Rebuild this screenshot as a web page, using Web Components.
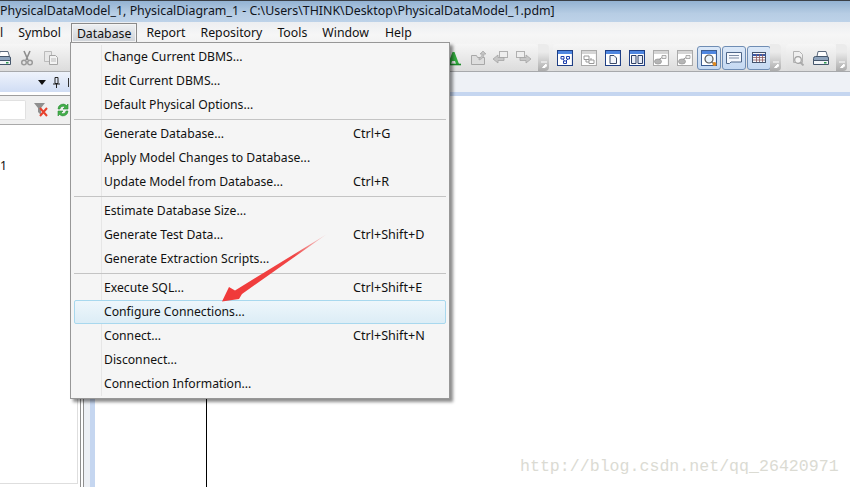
<!DOCTYPE html>
<html>
<head>
<meta charset="utf-8">
<title>PhysicalDataModel_1</title>
<style>
  html, body { margin: 0; height: 100%; overflow: hidden; background: #fff; }
  body { font: 12.2px "Noto Sans", "Liberation Sans", sans-serif; color: #111; }
</style>
</head>
<body>
<app-window>
  <title-bar>PhysicalDataModel_1, PhysicalDiagram_1 - C:\Users\THINK\Desktop\PhysicalDataModel_1.pdm]</title-bar>
  <menu-bar>
    <menu-title left="-2">l</menu-title>
    <menu-title left="11">Symbol</menu-title>
    <menu-title left="8" active>Database</menu-title>
    <menu-title left="7">Report</menu-title>
    <menu-title left="11">Repository</menu-title>
    <menu-title left="11">Tools</menu-title>
    <menu-title left="11">Window</menu-title>
    <menu-title left="12">Help</menu-title>
  </menu-bar>
  <tool-strip>
    <tool-group style="margin-left:-5px;width:77px">
      <tool-icon name="print" style="margin-right:8px"></tool-icon>
      <tool-icon name="cut" style="margin-right:8px"></tool-icon>
      <tool-icon name="copy"></tool-icon>
    </tool-group>
    <tool-group style="margin-left:366px;width:100px;justify-content:flex-end;padding-right:6px">
      <tool-icon name="font" style="margin-right:8px"></tool-icon>
      <tool-icon name="export" style="margin-right:6px"></tool-icon>
      <tool-icon name="back" style="margin-right:8px"></tool-icon>
      <tool-icon name="forward"></tool-icon>
    </tool-group>
    <tool-chevron></tool-chevron>
    <tool-group style="margin-left:4px;width:217px;padding-left:4px;gap:8px">
      <tool-icon name="tree"></tool-icon>
      <tool-icon name="boxes"></tool-icon>
      <tool-icon name="page"></tool-icon>
      <tool-icon name="pages"></tool-icon>
      <tool-icon name="link"></tool-icon>
      <tool-icon name="link"></tool-icon>
      <tool-icon name="zoomwin" active style="margin-left:-4px"></tool-icon>
      <tool-icon name="note" active style="margin-left:-7px"></tool-icon>
      <tool-icon name="grid" active style="margin-left:-7px"></tool-icon>
    </tool-group>
    <tool-chevron></tool-chevron>
    <tool-group style="margin-left:5px;width:50px;padding-left:4px;gap:7px">
      <tool-icon name="preview"></tool-icon>
      <tool-icon name="print"></tool-icon>
    </tool-group>
    <tool-chevron></tool-chevron>
  </tool-strip>
  <work-area>
    <side-panel>1</side-panel>
    <panel-splitter></panel-splitter>
    <diagram-canvas></diagram-canvas>
  </work-area>
  <drop-menu>
    <menu-row>Change Current DBMS...</menu-row>
    <menu-row>Edit Current DBMS...</menu-row>
    <menu-row>Default Physical Options...</menu-row>
    <menu-rule></menu-rule>
    <menu-row keys="Ctrl+G">Generate Database...</menu-row>
    <menu-row>Apply Model Changes to Database...</menu-row>
    <menu-row keys="Ctrl+R">Update Model from Database...</menu-row>
    <menu-rule></menu-rule>
    <menu-row>Estimate Database Size...</menu-row>
    <menu-row keys="Ctrl+Shift+D">Generate Test Data...</menu-row>
    <menu-row>Generate Extraction Scripts...</menu-row>
    <menu-rule></menu-rule>
    <menu-row keys="Ctrl+Shift+E">Execute SQL...</menu-row>
    <menu-row hot>Configure Connections...</menu-row>
    <menu-row keys="Ctrl+Shift+N">Connect...</menu-row>
    <menu-row>Disconnect...</menu-row>
    <menu-row>Connection Information...</menu-row>
  </drop-menu>
  <red-arrow></red-arrow>
  <water-mark>http://blog.csdn.net/qq_26420971</water-mark>
</app-window>

<script>
/**
 * Small helper so every element below gets an open shadow root from a string.
 *
 * @param {HTMLElement} host - The element to attach to.
 * @param {string} html - Markup and style of the shadow root.
 */
function fillShadow (host, html) {
  host.attachShadow({ mode: 'open' }).innerHTML = html
}

/**
 * Defines a custom element that has nothing but static shadow markup.
 *
 * @param {string} name - The tag name.
 * @param {string} html - Markup and style of the shadow root.
 */
function defineStatic (name, html) {
  customElements.define(name, class extends HTMLElement {
    constructor () {
      super()
      fillShadow(this, html)
    }
  })
}

defineStatic('app-window', `
  <style>
    :host { display: flex; flex-direction: column; position: relative; width: 850px; height: 487px; overflow: hidden; }
  </style>
  <slot></slot>
`)

defineStatic('title-bar', `
  <style>
    :host {
      display: block; height: 21px; line-height: 20px; white-space: nowrap;
      border-top: 1px solid #3a3f46; color: #10141c; font-size: 12.38px;
      background: linear-gradient(#93b2d2, #b7cde4 60%, #bdd2e8);
    }
  </style>
  <slot></slot>
`)

defineStatic('menu-bar', `
  <style>
    :host {
      display: flex; height: 21px; white-space: nowrap; font-size: 12.3px;
      background: linear-gradient(#eceef1, #f6f6f6 60%, #f3f3f3);
    }
  </style>
  <slot></slot>
`)

customElements.define('menu-title', class extends HTMLElement {
  constructor () {
    super()
    fillShadow(this, `
      <style>
        :host { display: block; margin-left: ${this.getAttribute('left')}px; }
        span { display: block; height: 19px; margin-top: 1px; line-height: 20px; padding: 0 2px; box-sizing: border-box; }
        :host([active]) span {
          padding: 0 5px; height: 20px; line-height: 19px; border: 1px solid #8a8a8a; border-bottom-color: #777;
          background: linear-gradient(#eef0f2, #cfd3d8); box-shadow: inset 0 0 0 1px #f4f4f4;
        }
      </style>
      <span><slot></slot></span>
    `)
  }
})

defineStatic('tool-strip', `
  <style>
    :host {
      display: flex; align-items: center; height: 29px; box-sizing: border-box; white-space: nowrap;
      padding-top: 1px; border-bottom: 1px solid #a7a9ac;
      background: linear-gradient(#f4f4f4, #dedede);
    }
  </style>
  <slot></slot>
`)

defineStatic('tool-group', `
  <style>
    :host {
      display: flex; align-items: center; flex: none; box-sizing: border-box; height: 27px; border-radius: 4px;
      background: linear-gradient(#f6f6f6, #dcdcdc);
    }
  </style>
  <slot></slot>
`)

defineStatic('tool-chevron', `
  <style>
    :host {
      display: block; flex: none; width: 11px; height: 27px; position: relative; border-radius: 0 4px 4px 0;
      background: linear-gradient(#ebebeb 30%, #acacac);
    }
    svg { display: block; position: absolute; left: 2px; bottom: 3px; }
  </style>
  <svg width="8" height="7" viewBox="0 0 8 7"><path d="M1 1h6M6 3L2.500 6.500h2.500L6.500 5z" fill="#fff" stroke="#fff" stroke-width="1"/></svg>
`)

/**
 * Window style frame used by most of the diagram buttons: title strip on top, heavy right and bottom edge.
 *
 * @param {string} edge - Colour of the frame.
 * @param {string} strip - Colour of the title strip.
 * @param {string} body - Extra svg inside the frame.
 * @returns {string} - The svg content.
 */
const frame = (edge, strip, body) => `
  <rect x=".5" y=".5" width="15" height="15" fill="#fff" stroke="${edge}"/>
  <rect x="1" y="1" width="14" height="3" fill="${strip}"/>
  <path d="M15.500 4v11.500H2" fill="none" stroke="${edge}" stroke-width="1.200"/>
  ${body}`

const ICONS = {
  print: '<path d="M5 1.500h8l1.500 5H4z" fill="#fff" stroke="#5d6b7e"/><path d="M2.500 6.500h11.500a1.500 1.500 0 0 1 1.500 1.500v5H.5V8.500a2 2 0 0 1 2-2z" fill="#8ea4bd" stroke="#45566b"/><path d="M.5 10.500h15v4H.5z" fill="#f2f5f8" stroke="#45566b"/><rect x="11" y="12" width="2.500" height="1.500" fill="#2f9a4e"/>',
  cut: '<path d="M5 1l4 9M11 1L7 10" stroke="#8d8d8d" stroke-width="1.600" fill="none"/><circle cx="5" cy="12.500" r="2.300" fill="none" stroke="#9a9a9a" stroke-width="1.500"/><circle cx="11" cy="12.500" r="2.300" fill="none" stroke="#9a9a9a" stroke-width="1.500"/>',
  copy: '<path d="M1.500 1.500h7v10h-7z" fill="#e8e8e8" stroke="#bbb"/><path d="M6.500 5.500h6l2 2v7h-8z" fill="#f3f3f3" stroke="#a5a5a5"/><path d="M8 9h5M8 11h5" stroke="#bbb"/>',
  font: '<path d="M2 14L6.500 2h2L13 14h-3l-1-3H6l-1 3z" fill="#32a83e"/><path d="M1 14.500h14" stroke="#1c8a2a" stroke-width="1.600"/>',
  export: '<path d="M1.500 5.500h5l1 2h7v7h-13z" fill="#dedede" stroke="#a8a8a8"/><path d="M9 8c2-.5 3-2 3-4H10l3-3 3 3h-2c0 3-2 5-5 6z" fill="#c4c4c4" stroke="#a5a5a5" stroke-width=".7"/>',
  back: '<rect x="7.500" y="1.500" width="8" height="6" fill="#eee" stroke="#b0b0b0"/><path d="M1 9l5-4v2.500h6v3H6V13z" fill="#c6c6c6" stroke="#a5a5a5" stroke-width=".8"/>',
  forward: '<rect x=".5" y="1.500" width="8" height="6" fill="#eee" stroke="#b0b0b0"/><path d="M15 9l-5-4v2.500H4v3h6V13z" fill="#c6c6c6" stroke="#a5a5a5" stroke-width=".8"/>',
  tree: frame('#1f3f85', '#4f86e0', '<path d="M4 6.500h3v2.500H4zM9.500 6.500h3v2.500h-3zM6.500 11h3v2.500h-3zM6 9l1.500 2M11 9L9 11" fill="none" stroke="#1c3fae"/>'),
  boxes: frame('#aaa', '#d5d5d5', '<path d="M3 6h5v3.500H3zM8 10h5v3.500H8zM5 9.500V12h3M10 10V8" fill="none" stroke="#999" stroke-width="1"/>'),
  page: frame('#1f3f85', '#4f86e0', '<path d="M5 5.500h4l2.500 2.500v5.500H5z" fill="#f4f6fa" stroke="#3a4a6a"/>'),
  pages: frame('#1f3f85', '#4f86e0', '<path d="M2.500 5.500h4.500v8H2.500zM9 5.500h4.500v8H9z" fill="#e9edf5" stroke="#2d3f66"/>'),
  link: frame('#aaa', '#d5d5d5', '<path d="M9 5.500h4v3H9z" fill="#eee" stroke="#999" stroke-width=".8"/><ellipse cx="5" cy="11.500" rx="3.500" ry="2.500" fill="#b5b5b5" stroke="#999" stroke-width=".8"/><path d="M6 9.500l3-2" stroke="#999"/>'),
  zoomwin: frame('#3c5d92', '#4f86e0', '<circle cx="8" cy="9" r="4" fill="#eaf3fb" stroke="#555" stroke-width="1.200"/><path d="M10.500 11.500l2 2" stroke="#777" stroke-width="1.600"/><circle cx="13.500" cy="14" r="2" fill="#e08a20"/>'),
  note: '<path d="M.5 2.500h15v9.500H5l-1.500 1.500H.5z" fill="#f5f8fd" stroke="#4e6688"/><path d="M3 5.500h10M3 8h10" stroke="#7e8da5"/>',
  grid: '<rect x="1.500" y="2.500" width="13" height="10" fill="#f5f8fd" stroke="#43536e"/><path d="M1.500 5h13" stroke="#3c5ba8" stroke-width="2"/><path d="M2 7.500h12M2 10h12M5.500 4v8M8.500 4v8M11.500 4v8" stroke="#8a5a60" stroke-width=".8"/>',
  preview: '<path d="M3.500 1.500h6l3 3v8h-9z" fill="#efefef" stroke="#b3b3b3"/><circle cx="8" cy="10" r="3.300" fill="#f5f5f5" stroke="#a0a0a0" stroke-width="1.200"/><path d="M10.500 12.500l3 3" stroke="#aaa" stroke-width="1.800"/>'
}

customElements.define('tool-icon', class extends HTMLElement {
  constructor () {
    super()
    fillShadow(this, `
      <style>
        :host { display: block; flex: none; width: 16px; height: 16px; padding: 2px 0; }
        :host([active]) {
          padding: 3px; border: 1px solid #6f8db4; border-radius: 3px; background: linear-gradient(#dbe8f8, #c5d9f2);
        }
        svg { display: block; }
      </style>
      <svg width="16" height="16" viewBox="0 0 16 16">${ICONS[this.getAttribute('name')]}</svg>
    `)
  }
})

defineStatic('work-area', `
  <style>
    :host { display: flex; flex: 1; min-height: 0; }
  </style>
  <slot></slot>
`)

defineStatic('side-panel', `
  <style>
    :host { display: flex; flex-direction: column; flex: none; width: 80px; height: 414px; box-sizing: border-box; border-right: 2px solid #fff; }
    .head {
      display: flex; align-items: center; height: 20px; padding-left: 38px; gap: 7px;
      background: linear-gradient(#eef3fc, #d0ddf4);
    }
    .rule { height: 3px; background: #fff; border-bottom: 1px solid #9e9e9e; }
    .tools {
      display: flex; align-items: center; height: 29px; padding-right: 9px; box-sizing: border-box; background: #f0f0f0;
      border-bottom: 1px solid #a9a9a9;
    }
    input {
      box-sizing: border-box; width: 26px; height: 20px; border: 1px solid #e1e1e1; border-left: 0; border-radius: 0 2px 2px 0;
      background: #fff; margin: 0 7px 0 0; padding: 0;
    }
    .tree { flex: 1; padding: 34px 0 0 0; line-height: 14px; background: #fff; border-right: 1px solid #dedede; border-bottom: 1px solid #dedede; margin-bottom: 2px; }
    svg { display: block; flex: none; }
  </style>
  <div class="head">
    <svg width="8" height="5" viewBox="0 0 8 5"><path d="M0 0h8L4 5z" fill="#111"/></svg>
    <svg width="7" height="11" viewBox="0 0 7 11"><path d="M2 .5h3v6H2zM0 7h7M3.500 7v4" fill="none" stroke="#222"/></svg>
    <svg width="3" height="9" viewBox="0 0 3 9"><path d="M1.500 0v9" stroke="#333"/></svg>
  </div>
  <div class="rule"></div>
  <div class="tools">
    <input type="text" aria-label="filter">
    <svg width="16" height="16" viewBox="0 0 16 16" style="margin-right:7px"><path d="M1 1h11L8 6v7L5 10V6z" fill="#8f8f8f"/><path d="M7 6l7 8M14 6l-7 8" stroke="#e8412c" stroke-width="2"/></svg>
    <svg width="14" height="16" viewBox="0 0 14 16"><path d="M2 7a5 5 0 0 1 8.500-3.500L12 2v5H7l2-2a3 3 0 0 0-5 2zM12 9a5 5 0 0 1-8.500 3.500L2 14V9h5l-2 2a3 3 0 0 0 5-2z" fill="#43b04a" stroke="#2b8a36" stroke-width=".6"/></svg>
  </div>
  <div class="tree"><slot></slot></div>
`)

defineStatic('panel-splitter', `
  <style>
    :host {
      display: block; flex: none; width: 15px;
      background: linear-gradient(90deg, #8f8f8f 0 1px, #fff 1px 3px, #8f8f8f 3px 4px, #edf0f5 4px 10px, #c5d6f0 10px 15px);
    }
  </style>
`)

defineStatic('diagram-canvas', `
  <style>
    :host { display: flex; flex-direction: column; flex: 1; background: #fff; }
    .tabs { height: 20px; background: #eef1f6; }
    .line { height: 4px; background: #c5d6f0; }
    .page { flex: 1; padding-left: 111px; }
    .border { width: 1px; height: 100%; background: #000; }
  </style>
  <div class="tabs"></div>
  <div class="line"></div>
  <div class="page"><div class="border"></div></div>
`)

defineStatic('drop-menu', `
  <style>
    :host {
      display: block; position: absolute; left: 70px; top: 42px; width: 380px; height: 357px; box-sizing: border-box;
      padding: 2px 3px; background: #f5f5f5; border: 1px solid #979797; box-shadow: 3px 3px 3px rgba(0, 0, 0, .45);
    }
    .gutter { position: absolute; left: 30px; top: 2px; bottom: 2px; width: 1px; background: #e6e6e6; }
    .rows { position: relative; }
  </style>
  <div class="gutter"></div>
  <div class="rows"><slot></slot></div>
`)

customElements.define('menu-row', class extends HTMLElement {
  constructor () {
    super()
    fillShadow(this, `
      <style>
        :host {
          display: grid; grid-template-columns: 249px auto; height: 24px; box-sizing: border-box; padding-left: 29px;
          line-height: 21px; white-space: nowrap; color: #111; border: 1px solid transparent; border-radius: 2px;
        }
        :host([hot]) {
          border-color: #a8d8ee;
          background: linear-gradient(#eef6fb, #dcedf6);
        }
        .keys { font-size: 12.6px; }
      </style>
      <span><slot></slot></span>
      <span class="keys">${this.getAttribute('keys') || ''}</span>
    `)
  }
})

defineStatic('menu-rule', `
  <style>
    :host { display: block; height: 5px; padding-top: 2px; box-sizing: border-box; }
    div { height: 1px; background: #c4c4c4; }
  </style>
  <div></div>
`)

defineStatic('red-arrow', `
  <style>
    :host { display: block; position: absolute; left: 220px; top: 232px; width: 110px; height: 72px; }
    svg { display: block; }
  </style>
  <svg width="110" height="72" viewBox="220 232 110 72">
    <defs>
      <linearGradient id="fade" gradientUnits="userSpaceOnUse" x1="327" y1="234" x2="232" y2="293">
        <stop offset="0" stop-color="#f04a4a" stop-opacity=".1"/>
        <stop offset=".35" stop-color="#f04545"/>
        <stop offset="1" stop-color="#f03a3a"/>
      </linearGradient>
    </defs>
    <path d="M222 301.500L229 287 235 290.500 327 234 242 294 239 299z" fill="url(#fade)"/>
  </svg>
`)

defineStatic('water-mark', `
  <style>
    :host {
      display: block; position: absolute; left: 520px; top: 456px; white-space: nowrap;
      font: 16.600px/22px "Liberation Mono", monospace; color: #dbdbd3;
    }
  </style>
  <slot></slot>
`)
</script>
</body>
</html>
